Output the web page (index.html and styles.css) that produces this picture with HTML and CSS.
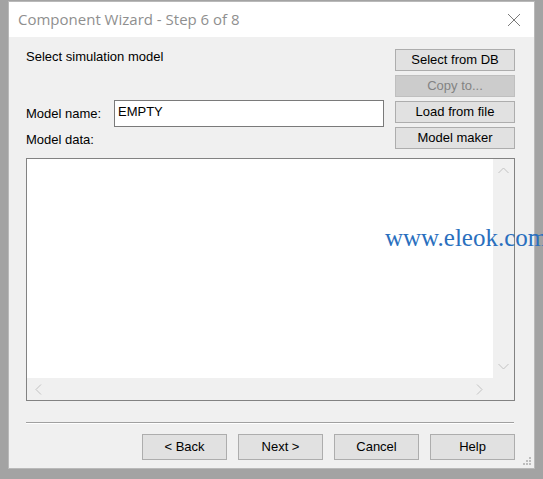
FILE: index.html
```html
<!DOCTYPE html>
<html>
<head>
<meta charset="utf-8">
<link rel="stylesheet" href="styles.css">
</head>
<body>
<div class="dialog">
  <div class="titlebar">
    <span class="title">Component Wizard - Step 6 of 8</span>
    <svg class="close" width="14" height="14" viewBox="0 0 14 14"><path d="M1 1 L13 13 M13 1 L1 13" stroke="#7a7a7a" stroke-width="1" fill="none"/></svg>
  </div>
  <div class="content">
    <div class="top">
      <div class="left">
        <div class="heading">Select simulation model</div>
        <div class="name-row">
          <span class="label">Model name:</span>
          <div class="input">EMPTY</div>
        </div>
        <div class="label data-label">Model data:</div>
      </div>
      <div class="side">
        <div class="btn">Select from DB</div>
        <div class="btn disabled">Copy to...</div>
        <div class="btn">Load from file</div>
        <div class="btn">Model maker</div>
      </div>
    </div>
    <div class="listbox">
      <div class="area"></div>
      <div class="vscroll">
        <svg width="11" height="7" viewBox="0 0 11 7"><path d="M0.5 6 L5.5 1 L10.5 6" stroke="#c2c2c2" fill="none"/></svg>
        <svg width="11" height="7" viewBox="0 0 11 7"><path d="M0.5 1 L5.5 6 L10.5 1" stroke="#c2c2c2" fill="none"/></svg>
      </div>
      <div class="hscroll">
        <svg width="7" height="11" viewBox="0 0 7 11"><path d="M6 0.5 L1 5.5 L6 10.5" stroke="#c2c2c2" fill="none"/></svg>
        <svg width="7" height="11" viewBox="0 0 7 11"><path d="M1 0.5 L6 5.5 L1 10.5" stroke="#c2c2c2" fill="none"/></svg>
      </div>
      <div class="corner"></div>
    </div>
    <div class="separator"></div>
    <div class="footer">
      <div class="btn big">&lt; Back</div>
      <div class="btn big">Next &gt;</div>
      <div class="btn big">Cancel</div>
      <div class="btn big">Help</div>
    </div>
    <svg class="grip" width="9" height="9" viewBox="0 0 9 9">
      <rect x="6" y="0" width="2" height="2" fill="#bdbdbd"/>
      <rect x="3" y="3" width="2" height="2" fill="#bdbdbd"/>
      <rect x="6" y="3" width="2" height="2" fill="#bdbdbd"/>
      <rect x="0" y="6" width="2" height="2" fill="#bdbdbd"/>
      <rect x="3" y="6" width="2" height="2" fill="#bdbdbd"/>
      <rect x="6" y="6" width="2" height="2" fill="#bdbdbd"/>
    </svg>
  </div>
  <div class="watermark">www.eleok.com</div>
</div>
</body>
</html>
```
FILE: styles.css
```css
html, body {
  margin: 0;
  padding: 0;
}
body {
  width: 543px;
  height: 479px;
  background: #a3a3a3;
  overflow: hidden;
  font-family: "Liberation Sans", Arial, sans-serif;
  font-size: 13px;
  color: #000;
}
.dialog {
  position: relative;
  margin: 1px 0 0 8px;
  width: 527px;
  height: 468px;
  background: #f0f0f0;
  box-sizing: border-box;
  border: 1px solid #b9b9b9;
  display: flex;
  flex-direction: column;
}
.titlebar {
  height: 35px;
  background: #fff;
  display: flex;
  align-items: center;
  justify-content: space-between;
  padding: 0 13px 0 9px;
  flex-shrink: 0;
}
.title {
  font-family: "Open Sans", "Noto Sans", sans-serif;
  font-size: 15px;
  color: #8f8f8f;
  padding-bottom: 2px;
}
.close {
  display: block;
}
.content {
  position: relative;
  flex: 1;
  padding: 12px 19px 0 17px;
}
.top {
  display: flex;
  gap: 11px;
}
.left {
  flex: 1;
  display: flex;
  flex-direction: column;
}
.heading {
  line-height: 16px;
}
.name-row {
  margin-top: 35px;
  display: flex;
  align-items: center;
  height: 27px;
}
.label {
  width: 88px;
  line-height: 16px;
}
.input {
  flex: 1;
  height: 27px;
  box-sizing: border-box;
  background: #fff;
  border: 1px solid #7a7a7a;
  padding: 4px 3px;
  line-height: 14px;
}
.data-label {
  margin-top: 5px;
}
.side {
  width: 120px;
  display: flex;
  flex-direction: column;
  gap: 4px;
}
.btn {
  height: 22px;
  box-sizing: border-box;
  background: #e1e1e1;
  border: 1px solid #adadad;
  display: flex;
  align-items: center;
  justify-content: center;
  line-height: 14px;
}
.btn.disabled {
  background: #cccccc;
  border-color: #bfbfbf;
  color: #838383;
}
.listbox {
  margin-top: 9px;
  height: 243px;
  box-sizing: border-box;
  border: 1px solid #828282;
  display: grid;
  grid-template-columns: 1fr 21px;
  grid-template-rows: 1fr 22px;
}
.area {
  background: #fff;
}
.vscroll {
  background: #f0f0f0;
  display: flex;
  flex-direction: column;
  justify-content: space-between;
  align-items: center;
  padding: 8px 0 8px;
}
.vscroll svg, .hscroll svg {
  display: block;
}
.hscroll {
  background: #f0f0f0;
  display: flex;
  justify-content: space-between;
  align-items: center;
  padding: 0 10px 0 8px;
}
.corner {
  background: #f0f0f0;
}
.separator {
  margin-top: 21px;
  height: 1px;
  background: #a0a0a0;
  border-bottom: 1px solid #fff;
  margin-right: 1px;
}
.footer {
  margin-top: 10px;
  display: flex;
  justify-content: flex-end;
  gap: 11px;
}
.btn.big {
  width: 85px;
  height: 26px;
}
.grip {
  position: absolute;
  right: 2px;
  bottom: 2px;
}
.watermark {
  position: absolute;
  left: 376px;
  top: 222px;
  font-family: "Liberation Serif", "Times New Roman", serif;
  font-size: 25px;
  color: #2a6fbe;
  white-space: nowrap;
}
```
